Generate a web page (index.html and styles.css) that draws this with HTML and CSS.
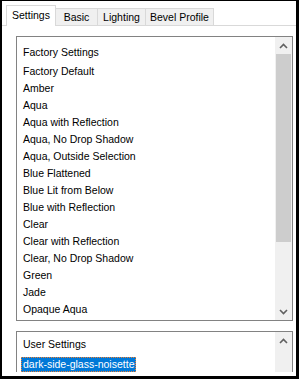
FILE: index.html
```html
<!DOCTYPE html>
<html>
<head>
<meta charset="utf-8">
<link rel="stylesheet" href="styles.css">
</head>
<body>
<div class="frame">
  <div class="tabs">
    <div class="tab active t1">Settings</div>
    <div class="tab t2">Basic</div>
    <div class="tab t3">Lighting</div>
    <div class="tab t4">Bevel Profile</div>
  </div>
  <div class="page">
    <div class="listbox lb1">
      <div class="content">
        <div class="hdr">Factory Settings</div>
        <div class="item">Factory Default</div>
        <div class="item">Amber</div>
        <div class="item">Aqua</div>
        <div class="item">Aqua with Reflection</div>
        <div class="item">Aqua, No Drop Shadow</div>
        <div class="item">Aqua, Outside Selection</div>
        <div class="item">Blue Flattened</div>
        <div class="item">Blue Lit from Below</div>
        <div class="item">Blue with Reflection</div>
        <div class="item">Clear</div>
        <div class="item">Clear with Reflection</div>
        <div class="item">Clear, No Drop Shadow</div>
        <div class="item">Green</div>
        <div class="item">Jade</div>
        <div class="item">Opaque Aqua</div>
      </div>
      <div class="scrollbar">
        <div class="arrow"><svg width="9" height="6" viewBox="0 0 9 6"><path d="M1 5 L4.5 1.5 L8 5" fill="none" stroke="#606060" stroke-width="1.6"/></svg></div>
        <div class="thumb"></div>
        <div class="track"></div>
        <div class="arrow"><svg width="9" height="6" viewBox="0 0 9 6"><path d="M1 1 L4.5 4.5 L8 1" fill="none" stroke="#606060" stroke-width="1.6"/></svg></div>
      </div>
    </div>
    <div class="listbox lb2">
      <div class="content">
        <div class="hdr">User Settings</div>
        <div class="item sel"><span>dark-side-glass-noisette</span></div>
      </div>
      <div class="scrollbar">
        <div class="arrow"><svg width="9" height="6" viewBox="0 0 9 6"><path d="M1 5 L4.5 1.5 L8 5" fill="none" stroke="#606060" stroke-width="1.6"/></svg></div>
        <div class="track"></div>
      </div>
    </div>
  </div>
</div>
</body>
</html>
```

FILE: styles.css
```css
* { box-sizing: border-box; }
html, body { margin: 0; padding: 0; background: #fff; }
body {
  font-family: "Liberation Sans", Arial, sans-serif;
  font-size: 10.5px;
  color: #000;
}
.frame {
  width: 299px;
  height: 379px;
  border-style: solid;
  border-color: #000;
  border-width: 1px 3px 3px 2px;
  background: #fff;
  overflow: hidden;
}
.tabs {
  display: flex;
  align-items: flex-end;
  height: 24px;
  padding-left: 4px;
}
.tab {
  height: 17px;
  line-height: 16px;
  text-align: center;
  background: #f0f0f0;
  border: 1px solid #d9d9d9;
  border-bottom: none;
  margin-left: -1px;
}
.t1 { width: 50px; margin-left: 0; }
.t2 { width: 43px; }
.t3 { width: 49px; }
.t4 { width: 69px; }
.tab.active {
  background: #fff;
  line-height: 19px;
  position: relative;
  z-index: 1;
  margin-bottom: -1px;
  height: 21px;
}
.page {
  height: 347px;
  border-top: 1px solid #d9d9d9;
  padding: 10px 3px 0 14px;
  overflow: hidden;
  display: flex;
  flex-direction: column;
  gap: 10px;
}
.listbox {
  border: 1px solid #828282;
  display: flex;
  flex-shrink: 0;
}
.lb1 { height: 285px; }
.lb2 { height: 60px; }
.content {
  flex: 1;
  padding: 7px 0 0 6px;
}
.hdr { height: 17px; line-height: 17px; margin-bottom: 2px; }
.item { height: 17px; line-height: 17px; }
.lb2 .content { padding-top: 4px; }
.lb2 .hdr { margin-bottom: 3px; }
.item.sel span {
  display: inline-block;
  margin-left: -2px;
  padding: 0 2px;
  height: 15px;
  line-height: 15px;
  background: #0078d7;
  color: #fff;
  outline: 1px dotted #f08030;
  outline-offset: -1px;
}
.scrollbar {
  width: 17px;
  display: flex;
  flex-direction: column;
  background: #f0f0f0;
}
.arrow {
  height: 17px;
  display: flex;
  align-items: center;
  justify-content: center;
  flex-shrink: 0;
}
.thumb {
  height: 188px;
  margin: 0 1px;
  background: #cdcdcd;
}
.track { flex: 1; }
```
